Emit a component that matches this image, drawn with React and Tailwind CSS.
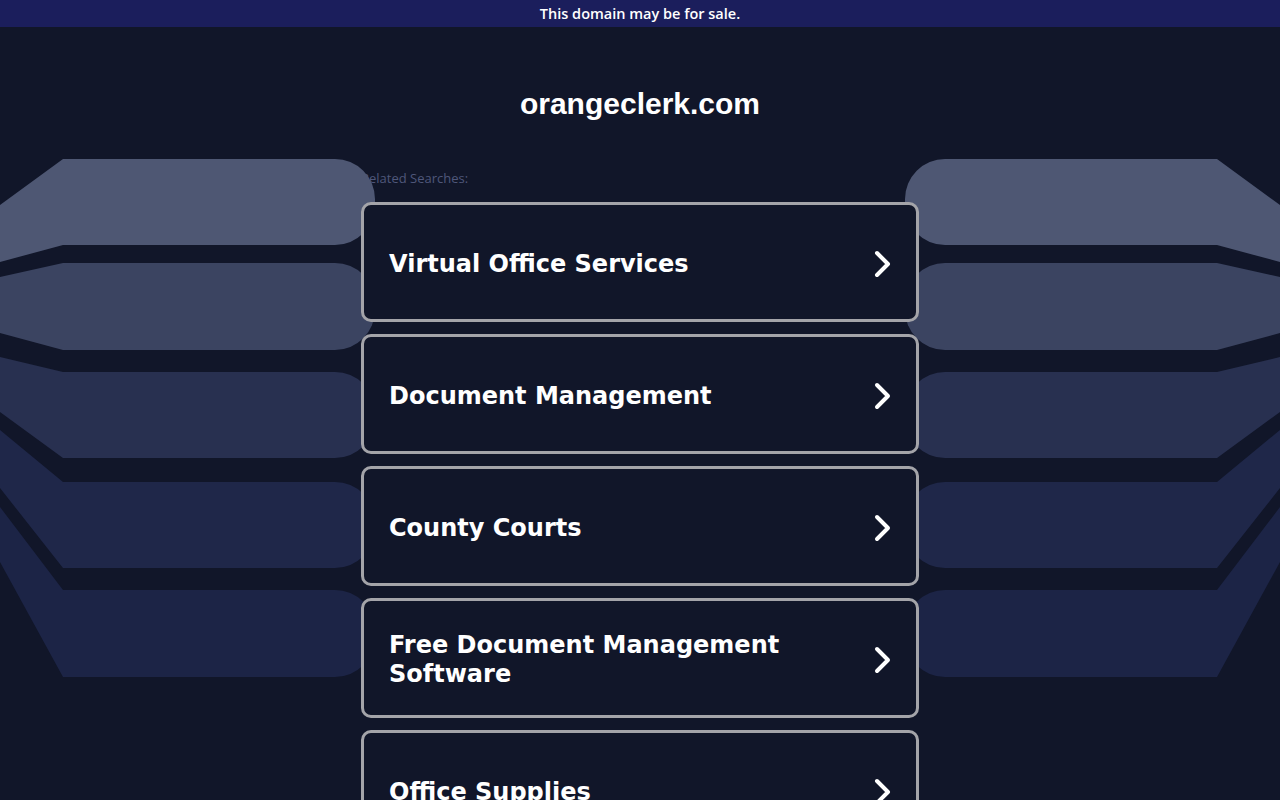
import React from "react";

const searches = [
    "Virtual Office Services",
    "Document Management",
    "County Courts",
    "Free Document Management Software",
    "Office Supplies",
];

// left-side stripes; right side is the mirror image
const stripes = [
    { t: 159, b: 245, lt: 205, lb: 262, fill: "#4e5773" },
    { t: 263, b: 350, lt: 277, lb: 333, fill: "#3b4461" },
    { t: 372, b: 458, lt: 357, lb: 412, fill: "#283050" },
    { t: 482, b: 568, lt: 430, lb: 488, fill: "#1f2749" },
    { t: 590, b: 677, lt: 507, lb: 562, fill: "#1c2446" },
];

function stripePath({ t, b, lt, lb }) {
    const x = 375;
    const r = 40;
    return `M0,${lt} L63,${t} L${x - r},${t} A${r},${r} 0 0 1 ${x},${t + r} L${x},${b - r} A${r},${r} 0 0 1 ${x - r},${b} L63,${b} L0,${lb} Z`;
}

function Stripes({ mirror }) {
    return (
        <svg
            width="380"
            height="800"
            viewBox="0 0 380 800"
            className={mirror ? "absolute right-0 top-0 z-10" : "absolute left-0 top-0 z-10"}
        >
            <g transform={mirror ? "translate(380,0) scale(-1,1)" : undefined}>
                {stripes.map((s, i) => (
                    <path key={i} d={stripePath(s)} fill={s.fill} />
                ))}
            </g>
        </svg>
    );
}

function Chevron() {
    return (
        <svg width="20" height="28" viewBox="0 0 20 28" className="shrink-0">
            <polyline
                points="4,3 15,14 4,25"
                fill="none"
                stroke="#ffffff"
                strokeWidth="4"
                strokeLinecap="round"
                strokeLinejoin="round"
            />
        </svg>
    );
}

export default function App() {
    return (
        <div className="relative w-full h-[800px] overflow-hidden bg-[#111629]">
            {/* Banner */}
            <div className="h-[27px] bg-[#1b1e5c] flex items-center justify-center">
                <span className="text-white text-[14.5px] font-semibold font-['Open_Sans',sans-serif]">
                    This domain may be for sale.
                </span>
            </div>

            <Stripes />
            <Stripes mirror />

            {/* Title */}
            <h1 className="mt-[61px] text-center text-white text-[30px] leading-[32px] font-bold font-['Liberation_Sans',Arial,sans-serif]">
                orangeclerk.com
            </h1>

            <div className="w-[558px] mx-auto mt-[49px]">
                <p className="pt-px text-[13px] leading-4 text-[#4f577a] font-['Open_Sans',sans-serif]">
                    Related Searches:
                </p>

                <div className="relative z-20 mt-4 flex flex-col gap-3">
                    {searches.map((item) => (
                        <div
                            key={item}
                            className="h-[120px] flex items-center justify-between border-[3px] border-[#a4a4a9] rounded-[10px] bg-[#111629] pt-1 pl-[25px] pr-[23px]"
                        >
                            <span className="text-white text-[24px] leading-[29px] font-bold font-['DejaVu_Sans',Verdana,sans-serif] max-w-[420px]">
                                {item}
                            </span>
                            <Chevron />
                        </div>
                    ))}
                </div>
            </div>
        </div>
    );
}
